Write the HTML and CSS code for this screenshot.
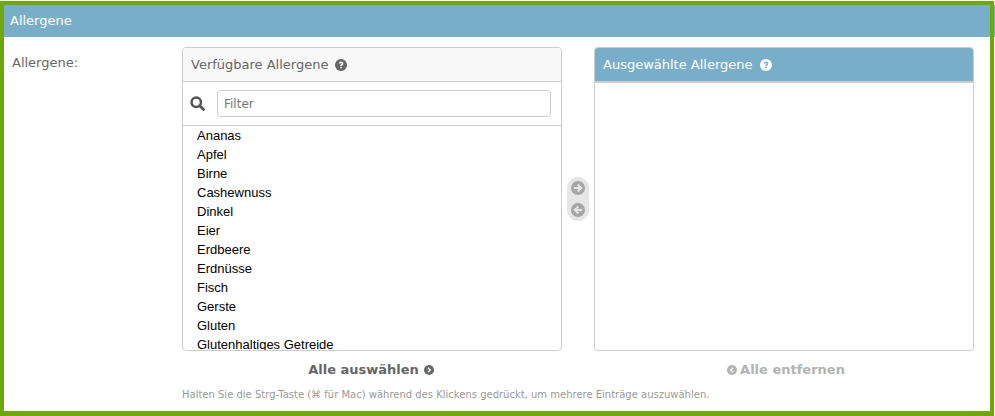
FILE: index.html
```html
<!DOCTYPE html>
<html lang="de">
<head>
<meta charset="utf-8">
<title>Allergene</title>
<link rel="stylesheet" href="styles.css">
</head>
<body>
<fieldset class="module">
  <h2 class="module-title">Allergene</h2>
  <div class="form-row">
    <label class="row-label">Allergene:</label>
    <div class="field">
      <div class="selector">
        <div class="sel-col">
          <div class="sel-box">
            <h3 class="sel-title">Verfügbare Allergene
              <svg class="help" viewBox="0 0 24 24"><circle cx="12" cy="12" r="12" fill="currentColor"/><path class="q" d="M7.600 9.200c.3-2.700 2.200-4.200 4.600-4.200 2.600 0 4.500 1.600 4.500 3.900 0 1.700-.9 2.600-2.100 3.400-.9.600-1.200 1-1.200 1.900h-3c0-1.900.6-2.800 1.800-3.600.8-.5 1.300-.9 1.300-1.500 0-.7-.6-1.200-1.400-1.200-.9 0-1.400.5-1.600 1.500zM10.400 15.600h3v3h-3z"/></svg>
            </h3>
            <div class="filter">
              <svg class="search" viewBox="0 0 24 24"><circle cx="10" cy="10" r="7.500" fill="none" stroke="currentColor" stroke-width="4"/><path d="M15.500 15.500l6 6" stroke="currentColor" stroke-width="4.500" stroke-linecap="round"/></svg>
              <input class="filter-input" type="text" placeholder="Filter">
            </div>
            <ul class="list">
              <li>Ananas</li><li>Apfel</li><li>Birne</li><li>Cashewnuss</li><li>Dinkel</li><li>Eier</li><li>Erdbeere</li><li>Erdnüsse</li><li>Fisch</li><li>Gerste</li><li>Gluten</li><li>Glutenhaltiges Getreide</li>
            </ul>
          </div>
          <div class="all-link dark">Alle auswählen
            <svg class="circle-icon" viewBox="0 0 24 24"><circle cx="12" cy="12" r="12" fill="currentColor"/><path d="M9.500 6.500l5.500 5.500-5.500 5.500" fill="none" stroke="#fff" stroke-width="3.400"/></svg>
          </div>
        </div>
        <div class="chooser">
          <svg class="chooser-icon" viewBox="0 0 24 24"><circle cx="12" cy="12" r="12" fill="currentColor"/><path d="M5 12h12M11.500 6l6 6-6 6" fill="none" stroke="#e6e6e6" stroke-width="3.400"/></svg>
          <svg class="chooser-icon" viewBox="0 0 24 24"><circle cx="12" cy="12" r="12" fill="currentColor"/><path d="M19 12H7M12.500 6l-6 6 6 6" fill="none" stroke="#e6e6e6" stroke-width="3.400"/></svg>
        </div>
        <div class="sel-col">
          <div class="sel-box">
            <h3 class="sel-title chosen">Ausgewählte Allergene
              <svg class="help" viewBox="0 0 24 24"><circle cx="12" cy="12" r="12" fill="currentColor"/><path class="q-blue" d="M7.600 9.200c.3-2.700 2.200-4.200 4.600-4.200 2.600 0 4.500 1.600 4.500 3.900 0 1.700-.9 2.600-2.100 3.400-.9.600-1.200 1-1.200 1.900h-3c0-1.900.6-2.800 1.800-3.600.8-.5 1.300-.9 1.300-1.500 0-.7-.6-1.200-1.400-1.200-.9 0-1.400.5-1.600 1.500zM10.400 15.600h3v3h-3z"/></svg>
            </h3>
          </div>
          <div class="all-link muted">
            <svg class="circle-icon" viewBox="0 0 24 24"><circle cx="12" cy="12" r="12" fill="currentColor"/><path d="M14.500 6.500L9 12l5.500 5.500" fill="none" stroke="#fff" stroke-width="3.400"/></svg>
            Alle entfernen</div>
        </div>
      </div>
      <p class="help-text">Halten Sie die Strg-Taste (⌘ für Mac) während des Klickens gedrückt, um mehrere Einträge auszuwählen.</p>
    </div>
  </div>
</fieldset>
</body>
</html>
```
FILE: styles.css
```css
html { margin: 0; padding: 0; background: #fff; }
body { margin: 0; height: 416px; overflow: hidden; padding-top: 1px; box-sizing: border-box; font-family: "DejaVu Sans", sans-serif; background: linear-gradient(#79aec8, #79aec8) no-repeat 100% 5px / 1px 32px; }
.module { box-sizing: border-box; width: 994px; height: 415px; margin: 0; padding: 0; border: 4px solid #70a80c; border-bottom-width: 5px; min-width: 0; }
.module-title { margin: 0; height: 32px; line-height: 31px; padding-left: 6px; background: #79aec8; color: #fff; font-size: 13px; font-weight: 400; }
.form-row { display: flex; padding-top: 10px; }
.row-label { width: 170px; padding: 7px 0 0 8px; flex: none; font-size: 13px; color: #666; line-height: 18px; }
.field { flex: 1; }
.selector { display: flex; align-items: flex-start; }
.sel-col { width: 380px; flex: none; }
.sel-box { box-sizing: border-box; height: 304px; border: 1px solid #ccc; border-radius: 4px; overflow: hidden; background: #fff; }
.sel-title { box-sizing: border-box; margin: 0; height: 34px; padding-left: 8px; font-size: 13px; font-weight: 400; color: #666; background: #f8f8f8; border-bottom: 1px solid #ccc; display: flex; align-items: center; gap: 7px; }
.sel-title.chosen { height: 35px; gap: 7px; background: #79aec8; color: #fff; border-bottom: 2px solid #ccc; }
.help { width: 12px; height: 12px; flex: none; }
.q { fill: #f8f8f8; }
.q-blue { fill: #79aec8; }
.filter { box-sizing: border-box; height: 44px; display: flex; align-items: center; padding: 0 10px 0 7px; gap: 12px; border-bottom: 1px solid #ccc; color: #555; }
.search { width: 15px; height: 15px; flex: none; }
.filter-input { box-sizing: border-box; flex: 1; min-width: 0; height: 27px; border: 1px solid #ccc; border-radius: 4px; padding: 0 6px; margin: 0; font-family: "DejaVu Sans", sans-serif; font-size: 12px; color: #333; background: #fff; }
.filter-input::placeholder { color: #777; opacity: 1; }
.list { margin: 0; padding: 0 0 0 14px; list-style: none; font-family: "Liberation Sans", sans-serif; font-size: 13px; line-height: 19px; color: #000; }
.chooser { width: 22px; flex: none; margin: 130px 5px 0; height: 44px; background: #e6e6e6; border-radius: 11px; display: flex; flex-direction: column; align-items: center; justify-content: center; gap: 8px; color: #a6a6a6; }
.chooser-icon { width: 14px; height: 14px; }
.all-link { display: flex; justify-content: center; align-items: center; gap: 5px; margin-top: 9px; height: 18px; font-size: 13px; font-weight: 700; }
.all-link.dark { color: #666; padding-right: 2px; }
.all-link.muted { color: #b3b3b3; gap: 3px; padding-left: 4px; }
.all-link .circle-icon { width: 10px; height: 10px; margin-top: 2px; }
.help-text { margin: 10px 0 0; font-size: 10px; line-height: 13px; color: #999; }
```
